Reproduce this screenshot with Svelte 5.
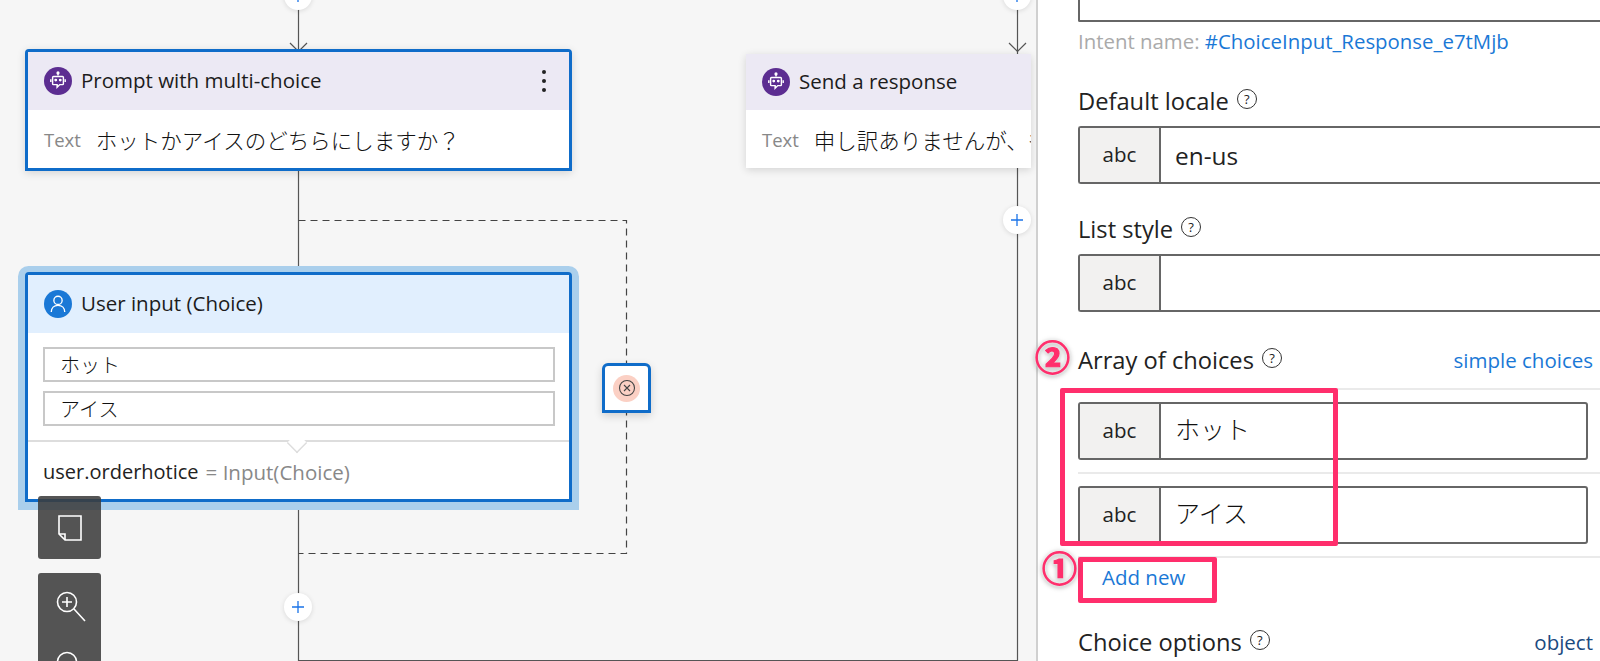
<script lang="ts">
  const plusButtons = [
    { x: 298, y: -4 },
    { x: 298, y: 607 },
    { x: 1017, y: -4 },
    { x: 1017, y: 220 },
  ];
  const choices = ["ホット", "アイス"];
</script>

<div class="page">
  <main class="canvas">
    <svg class="wires" width="1037" height="661" fill="none">
      <path d="M298.5 0V272M298.5 501V660.5H1017.5V0" stroke="#555" stroke-width="1.2" />
      <path d="M298.5 220.5H626.5V553.5H298.5" stroke="#444" stroke-width="1.2" stroke-dasharray="7 5" />
      <path d="M290 43l8.5 8.5 8.5-8.5M1009 43l8.5 8.5 8.5-8.5" stroke="#555" stroke-width="1.2" />
    </svg>

    {#each plusButtons as p}
      <button class="plus" style:left="{p.x - 14}px" style:top="{p.y - 14}px" aria-label="Add">
        <svg width="14" height="14" viewBox="0 0 14 14"><path d="M7 1v12M1 7h12" stroke="#1a73e8" stroke-width="1.3" /></svg>
      </button>
    {/each}

    <section class="node selected prompt-node">
      <header class="node-head bot">
        <span class="avatar purple">
          <svg width="20" height="22" viewBox="0 0 20 22" fill="none" stroke="#fff" stroke-width="1.6">
            <path d="M10 1v4" />
            <circle cx="10" cy="2" r="1" fill="#fff" />
            <path d="M5 6h10a1 1 0 0 1 1 1v7a1 1 0 0 1-1 1h-3l-3 3v-3H5a1 1 0 0 1-1-1V7a1 1 0 0 1 1-1z" />
            <path d="M2 9v3M18 9v3" />
            <circle cx="7.5" cy="10" r=".8" fill="#fff" />
            <circle cx="12.5" cy="10" r=".8" fill="#fff" />
          </svg>
        </span>
        <span class="title">Prompt with multi-choice</span>
        <span class="more" aria-hidden="true"><i></i><i></i><i></i></span>
      </header>
      <div class="node-body">
        <span class="key">Text</span>
        <span class="jp">ホットかアイスのどちらにしますか？</span>
      </div>
    </section>

    <section class="node response-node">
      <header class="node-head bot">
        <span class="avatar purple">
          <svg width="20" height="22" viewBox="0 0 20 22" fill="none" stroke="#fff" stroke-width="1.6">
            <path d="M10 1v4" />
            <circle cx="10" cy="2" r="1" fill="#fff" />
            <path d="M5 6h10a1 1 0 0 1 1 1v7a1 1 0 0 1-1 1h-3l-3 3v-3H5a1 1 0 0 1-1-1V7a1 1 0 0 1 1-1z" />
            <path d="M2 9v3M18 9v3" />
            <circle cx="7.5" cy="10" r=".8" fill="#fff" />
            <circle cx="12.5" cy="10" r=".8" fill="#fff" />
          </svg>
        </span>
        <span class="title">Send a response</span>
      </header>
      <div class="node-body">
        <span class="key">Text</span>
        <span class="jp">申し訳ありませんが、も</span>
      </div>
    </section>

    <section class="node selected input-node">
      <header class="node-head user">
        <span class="avatar blue">
          <svg width="20" height="22" viewBox="0 0 20 22" fill="none" stroke="#fff" stroke-width="1.5">
            <circle cx="10" cy="7" r="4.6" />
            <path d="M2.5 20c0-4.5 3-7.5 7.5-7.5s7.5 3 7.5 7.5" />
          </svg>
        </span>
        <span class="title">User input (Choice)</span>
      </header>
      <div class="choice-list">
        {#each choices as c}
          <div class="choice">{c}</div>
        {/each}
      </div>
      <div class="assign">
        <span>user.orderhotice</span>
        <span class="muted">= Input(Choice)</span>
      </div>
    </section>

    <div class="error-node">
      <span class="error-dot">
        <svg width="18" height="18" viewBox="0 0 18 18" fill="none" stroke="#444" stroke-width="1.1">
          <circle cx="9" cy="9" r="7.5" />
          <path d="M6 6l6 6M12 6l-6 6" />
        </svg>
      </span>
    </div>

    <div class="toolbar">
      <button class="tool" aria-label="Note">
        <svg width="28" height="28" viewBox="0 0 28 28" fill="none" stroke="#fff" stroke-width="1.6">
          <path d="M3 2h22v24H9l-6-6z" />
          <path d="M3 20h6v6" />
        </svg>
      </button>
      <button class="tool zoomers" aria-label="Zoom">
        <svg width="32" height="36" viewBox="0 0 32 36" fill="none" stroke="#fff" stroke-width="1.6">
          <circle cx="12" cy="12" r="9.5" />
          <path d="M12 7v10M7 12h10M19 19l11 12" />
        </svg>
        <svg width="32" height="36" viewBox="0 0 32 36" fill="none" stroke="#fff" stroke-width="1.6">
          <circle cx="12" cy="12" r="9.5" />
          <path d="M7 12h10M19 19l11 12" />
        </svg>
      </button>
    </div>
  </main>

  <aside class="panel">
    <div class="cut-input"></div>
    <p class="intent">Intent name: <a href="#intent">#ChoiceInput_Response_e7tMjb</a></p>

    <div class="label-row locale"><span>Default locale</span><span class="help">?</span></div>
    <div class="field wide"><span class="abc">abc</span><span class="value">en-us</span></div>

    <div class="label-row liststyle"><span>List style</span><span class="help">?</span></div>
    <div class="field wide"><span class="abc">abc</span><span class="value"></span></div>

    <div class="label-row array">
      <span>Array of choices</span><span class="help">?</span>
      <a class="side-link" href="#simple">simple choices</a>
    </div>
    <div class="array-list">
      {#each choices as c}
        <div class="array-item">
          <div class="field"><span class="abc">abc</span><span class="value jpv">{c}</span></div>
        </div>
      {/each}
    </div>
    <a class="add-new" href="#add">Add new</a>

    <div class="label-row options">
      <span>Choice options</span><span class="help">?</span>
      <span class="side-type">object</span>
    </div>
  </aside>

  <div class="mark box-choices"></div>
  <div class="mark box-add"></div>
  <span class="badge badge-2">②</span>
  <span class="badge badge-1">①</span>
</div>

<style>
  :global(body) {
    margin: 0;
    background: #fff;
  }

  .page {
    position: relative;
    display: flex;
    width: 1600px;
    height: 661px;
    overflow: hidden;
    font-family: "Open Sans", "Noto Sans CJK JP", sans-serif;
    color: #222;
  }

  .canvas {
    position: relative;
    flex: 0 0 1036px;
    height: 661px;
    overflow: hidden;
    background: #f6f6f6;
  }

  .wires {
    position: absolute;
    left: 0;
    top: 0;
  }

  .plus {
    position: absolute;
    display: flex;
    align-items: center;
    justify-content: center;
    width: 28px;
    height: 28px;
    padding: 0;
    border: none;
    border-radius: 50%;
    background: #fff;
    box-shadow: 0 1px 5px rgba(0, 0, 0, 0.12);
  }

  .node {
    position: absolute;
    box-sizing: border-box;
    background: #fff;
    box-shadow: 0 2px 8px rgba(0, 0, 0, 0.14);
  }

  .node.selected {
    border: 3px solid #0f6cc9;
    border-radius: 4px 4px 0 0;
  }

  .prompt-node {
    left: 25px;
    top: 49px;
    width: 547px;
    height: 122px;
  }

  .response-node {
    left: 746px;
    top: 54px;
    width: 285px;
    height: 114px;
    overflow: hidden;
  }

  .input-node {
    left: 25px;
    top: 272px;
    width: 547px;
    height: 230px;
    box-shadow: 0 1px 0 7px #aacfec;
    border-radius: 6px 6px 0 0;
  }

  .node-head {
    display: flex;
    align-items: center;
    gap: 9px;
    box-sizing: border-box;
    height: 58px;
    padding: 0 16px;
  }

  .response-node .node-head {
    height: 56px;
  }

  .response-node .title {
    margin-top: -3px;
  }

  .node-head.bot {
    background: #ece9f4;
  }

  .node-head.user {
    background: #e1effe;
  }

  .avatar {
    display: flex;
    align-items: center;
    justify-content: center;
    flex: none;
    width: 28px;
    height: 28px;
    border-radius: 50%;
    overflow: hidden;
  }

  .avatar svg {
    width: 18px;
    height: 20px;
  }

  .avatar.purple {
    background: #5c2d91;
  }

  .avatar.blue {
    background: #1a78d6;
  }

  .title {
    font-size: 20.5px;
    line-height: 26px;
    margin-top: -2px;
    color: #1c1c1c;
    white-space: nowrap;
  }

  .more {
    display: flex;
    flex-direction: column;
    gap: 5px;
    margin-left: auto;
    margin-right: 7px;
  }

  .more i {
    display: block;
    width: 4px;
    height: 4px;
    border-radius: 50%;
    background: #222;
  }

  .node-body {
    display: flex;
    align-items: center;
    gap: 15px;
    height: 58px;
    padding: 0 16px;
    white-space: nowrap;
  }

  .key {
    font-size: 18.5px;
    color: #888;
  }

  .jp {
    font-size: 21.5px;
    font-weight: 300;
    color: #111;
  }

  .choice-list {
    display: flex;
    flex-direction: column;
    gap: 9px;
    padding: 14px 14px 14px 15px;
  }

  .choice {
    box-sizing: border-box;
    height: 35px;
    padding-left: 15px;
    border: 2px solid #c8c8c8;
    font-size: 20px;
    font-weight: 300;
    line-height: 33px;
    color: #111;
  }

  .assign {
    position: relative;
    display: flex;
    gap: 7px;
    padding: 16px 15px 0;
    border-top: 2px solid #ddd;
    font-size: 20px;
    white-space: nowrap;
  }

  .assign::before {
    content: "";
    position: absolute;
    left: 259px;
    top: -9px;
    width: 20px;
    height: 20px;
    box-sizing: border-box;
    border-right: 2px solid #ddd;
    border-bottom: 2px solid #ddd;
    background: #fff;
    transform: rotate(45deg) scale(0.72);
    transform-origin: center;
  }

  .muted {
    color: #888;
    font-size: 20.5px;
  }

  .error-node {
    position: absolute;
    left: 602px;
    top: 363px;
    display: flex;
    align-items: center;
    justify-content: center;
    box-sizing: border-box;
    width: 49px;
    height: 50px;
    background: #fff;
    border: 3px solid #0f6cc9;
    border-radius: 6px 6px 0 0;
    box-shadow: 0 3px 8px rgba(0, 0, 0, 0.16);
  }

  .error-dot {
    display: flex;
    align-items: center;
    justify-content: center;
    width: 27px;
    height: 27px;
    border-radius: 50%;
    background: #fbd0c4;
  }

  .toolbar {
    position: absolute;
    left: 38px;
    top: 496px;
    display: flex;
    flex-direction: column;
    gap: 14px;
  }

  .tool {
    display: flex;
    flex-direction: column;
    align-items: center;
    justify-content: center;
    box-sizing: border-box;
    width: 63px;
    height: 63px;
    padding: 0;
    border: none;
    border-radius: 3px;
    background: rgba(60, 60, 60, 0.87);
  }

  .tool.zoomers {
    justify-content: flex-start;
    gap: 24px;
    height: 120px;
    padding: 17px 0 0 2px;
  }

  .panel {
    flex: 1;
    min-width: 0;
    box-sizing: border-box;
    padding-left: 40px;
    border-left: 2px solid #d0d0d0;
    background: #fff;
  }

  .cut-input {
    height: 20px;
    border-left: 2px solid #666;
    border-bottom: 2px solid #666;
    border-bottom-left-radius: 2px;
  }

  .intent {
    margin: 6px 0 0;
    font-size: 20.4px;
    line-height: 26px;
    color: #aaa;
    white-space: nowrap;
  }

  .intent a,
  .side-link,
  .add-new {
    color: #1a78d6;
    text-decoration: none;
  }

  .label-row {
    display: flex;
    align-items: center;
    gap: 8px;
    height: 28px;
    font-size: 23.7px;
    color: #222;
    white-space: nowrap;
  }

  .locale {
    margin-top: 33px;
    margin-bottom: 11px;
  }

  .liststyle {
    margin-top: 31px;
    margin-bottom: 11px;
  }

  .array {
    margin-top: 34px;
    margin-bottom: 14px;
    margin-right: 7px;
  }

  .options {
    margin-top: 36px;
    margin-right: 7px;
  }

  .help {
    display: inline-flex;
    align-items: center;
    justify-content: center;
    box-sizing: border-box;
    width: 20px;
    height: 20px;
    border: 1.4px solid #333;
    border-radius: 50%;
    font-size: 13px;
    line-height: 1;
    margin-top: -4px;
  }

  .side-link,
  .side-type {
    margin-left: auto;
    font-size: 20.5px;
  }

  .side-type {
    color: #1b4a80;
  }

  .field {
    display: flex;
    box-sizing: border-box;
    height: 58px;
    border: 2px solid #666;
    border-radius: 3px;
    margin-right: 12px;
    background: #fff;
  }

  .field.wide {
    margin-right: -4px;
    border-right: none;
    border-radius: 3px 0 0 3px;
  }

  .abc {
    flex: 0 0 81px;
    display: flex;
    align-items: center;
    justify-content: center;
    border-right: 2px solid #666;
    background: #f2f1f0;
    font-size: 20.5px;
    padding-bottom: 3px;
    box-sizing: border-box;
  }

  .value {
    padding-left: 14px;
    font-size: 24.4px;
    line-height: 56px;
  }

  .value.jpv {
    font-size: 25px;
    font-weight: 300;
    line-height: 50px;
    color: #111;
  }

  .array-list {
    border-top: 2px solid #eaeaea;
  }

  .array-item {
    padding: 12px 0;
    border-bottom: 2px solid #eaeaea;
  }

  .add-new {
    display: block;
    margin: 4px 0 0 24px;
    font-size: 20.5px;
    line-height: 30px;
  }

  .mark {
    position: absolute;
    box-sizing: border-box;
    border: 5px solid #ff2e6c;
    border-radius: 2px;
  }

  .box-choices {
    left: 1060px;
    top: 388px;
    width: 278px;
    height: 158px;
  }

  .box-add {
    left: 1078px;
    top: 557px;
    width: 139px;
    height: 46px;
  }

  .badge {
    position: absolute;
    font-family: "Noto Sans CJK JP", sans-serif;
    font-size: 35px;
    font-weight: 700;
    line-height: 1;
    color: #ff2e6c;
    -webkit-text-stroke: 1.2px #ff2e6c;
    filter: drop-shadow(0 0 1.5px #fff) drop-shadow(0 1px 2px rgba(0, 0, 0, 0.35));
  }

  .badge-2 {
    left: 1035px;
    top: 338px;
  }

  .badge-1 {
    left: 1042px;
    top: 549px;
  }
</style>
